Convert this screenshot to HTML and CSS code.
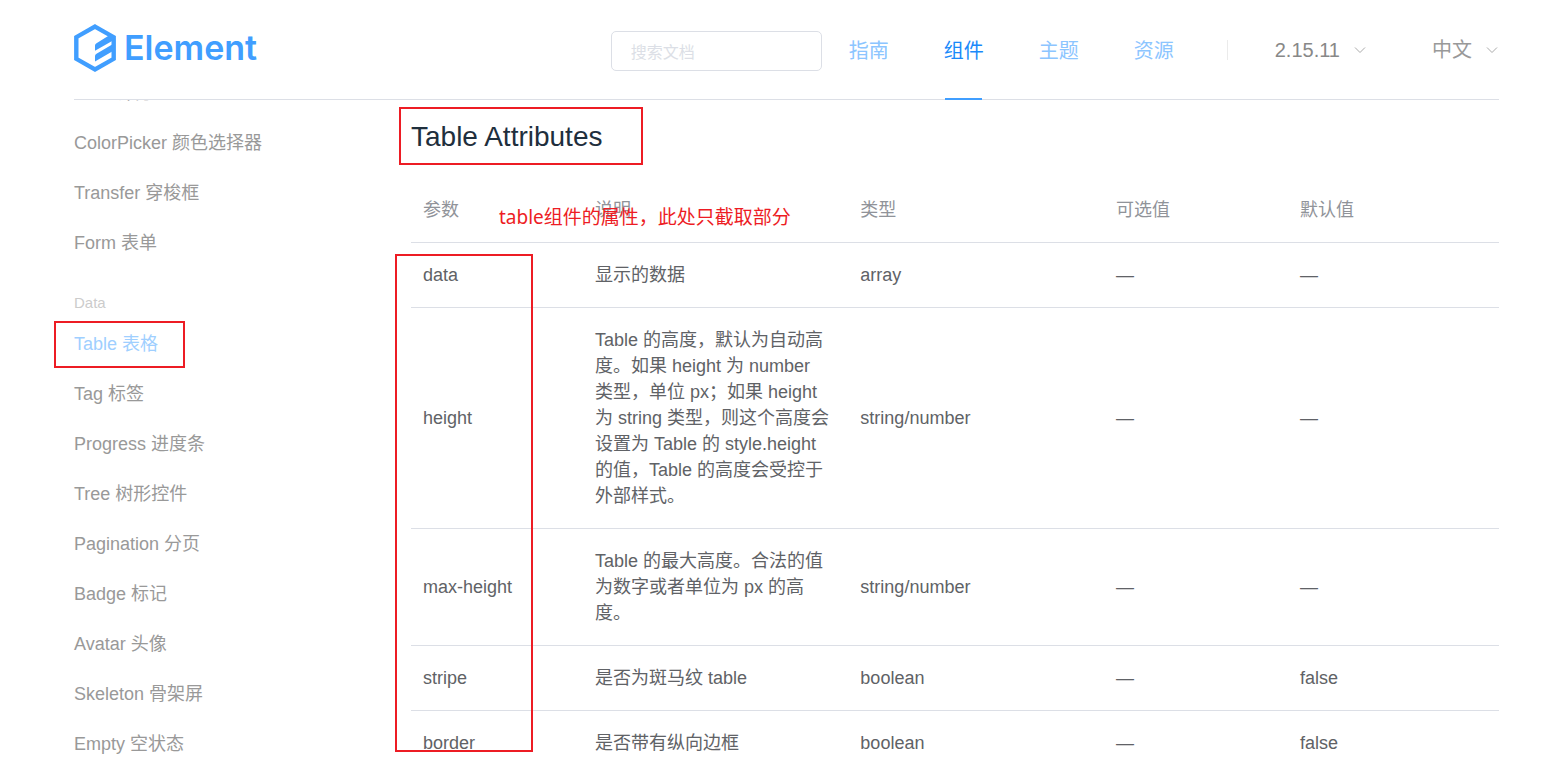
FILE: index.html
```html
<!DOCTYPE html>
<html lang="zh-CN">
<head>
<meta charset="utf-8">
<title>Element - Table</title>
<link rel="stylesheet" href="styles.css">
</head>
<body>
<header class="header">
  <a class="logo" href="#">
    <svg class="logo-mark" viewBox="0 0 42 48" aria-hidden="true">
      <path d="M21 2.600 39.700 13.200V34.800L21 45.400 2.300 34.800V13.200Z" fill="none" stroke="#409eff" stroke-width="4.400"/>
      <path d="M21 21.500Q21 20 22.500 19.200L36.500 10.500 39 12V16.500L21 26.800ZM21 32Q21 30.500 22.500 29.700L39 20V27L21 37.400Z" fill="#409eff"/>
    </svg>
    <span>Element</span>
  </a>
  <div class="tools">
    <input class="search" type="text" placeholder="搜索文档" aria-label="搜索文档">
    <nav class="nav">
      <a href="#">指南</a>
      <a href="#" class="active">组件</a>
      <a href="#">主题</a>
      <a href="#">资源</a>
    </nav>
    <button class="drop version" type="button">2.15.11
      <svg viewBox="0 0 12 8" aria-hidden="true"><path d="M1 1.500 6 6.500 11 1.500"/></svg>
    </button>
    <button class="drop" type="button">中文
      <svg viewBox="0 0 12 8" aria-hidden="true"><path d="M1 1.500 6 6.500 11 1.500"/></svg>
    </button>
  </div>
</header>
<div class="body">
  <aside class="side">
    <ul>
      <li><a href="#">Rate 评分</a></li>
      <li><a href="#">ColorPicker 颜色选择器</a></li>
      <li><a href="#">Transfer 穿梭框</a></li>
      <li><a href="#">Form 表单</a></li>
    </ul>
    <div class="group">Data</div>
    <ul>
      <li class="current"><a href="#">Table 表格</a><span class="mark mark-side"></span></li>
      <li><a href="#">Tag 标签</a></li>
      <li><a href="#">Progress 进度条</a></li>
      <li><a href="#">Tree 树形控件</a></li>
      <li><a href="#">Pagination 分页</a></li>
      <li><a href="#">Badge 标记</a></li>
      <li><a href="#">Avatar 头像</a></li>
      <li><a href="#">Skeleton 骨架屏</a></li>
      <li><a href="#">Empty 空状态</a></li>
    </ul>
  </aside>
  <main class="content">
    <h3>Table Attributes<span class="mark mark-title"></span></h3>
    <div class="table-wrap">
      <table>
        <colgroup><col class="c1"><col class="c2"><col class="c3"><col class="c4"><col class="c5"></colgroup>
        <thead>
          <tr><th>参数</th><th>说明</th><th>类型</th><th>可选值</th><th>默认值</th></tr>
        </thead>
        <tbody>
          <tr><td>data</td><td>显示的数据</td><td>array</td><td>—</td><td>—</td></tr>
          <tr><td>height</td><td>Table 的高度，默认为自动高度。如果 height 为 number 类型，单位 px；如果 height 为 string 类型，则这个高度会设置为 Table 的 style.height 的值，Table 的高度会受控于外部样式。</td><td>string/number</td><td>—</td><td>—</td></tr>
          <tr><td>max-height</td><td>Table 的最大高度。合法的值为数字或者单位为 px 的高度。</td><td>string/number</td><td>—</td><td>—</td></tr>
          <tr><td>stripe</td><td>是否为斑马纹 table</td><td>boolean</td><td>—</td><td>false</td></tr>
          <tr><td>border</td><td>是否带有纵向边框</td><td>boolean</td><td>—</td><td>false</td></tr>
        </tbody>
      </table>
      <span class="mark mark-column"></span>
      <p class="note">table组件的属性，此处只截取部分</p>
    </div>
  </main>
</div>
</body>
</html>
```
FILE: styles.css
```css
* { box-sizing: border-box; }
body {
  margin: 0;
  height: 100vh;
  display: flex;
  flex-direction: column;
  overflow: hidden;
  padding: 0 56px 0 74px;
  background: #fff;
  color: #606266;
  font: 18px/26px "Liberation Sans", "Noto Sans CJK SC", sans-serif;
}
a { text-decoration: none; color: inherit; }
ul { list-style: none; margin: 0; padding: 0; }

.header {
  flex: none;
  height: 100px;
  display: flex;
  justify-content: space-between;
  border-bottom: 1px solid #dcdfe6;
}
.logo {
  display: flex;
  align-items: center;
  gap: 8px;
  height: 96px;
  color: #409eff;
  font: 600 34px/48px Inter, sans-serif;
}
.logo-mark { width: 42px; height: 48px; }
.tools { display: flex; align-items: center; }
.search {
  width: 211px;
  height: 40px;
  margin: 2px 27px 0 0;
  padding: 0 19px;
  border: 1px solid #dcdfe6;
  border-radius: 5px;
  font: 16px "Noto Sans CJK SC", sans-serif;
}
.search::placeholder { color: #dcdfe6; opacity: 1; }
.nav { display: flex; gap: 55px; height: 100px; padding-right: 53px; }
.nav::after {
  content: "";
  align-self: center;
  width: 1px;
  height: 20px;
  margin: 0 -55px 0 -2px;
  background: #ebebeb;
}
.nav a {
  font-size: 20px;
  line-height: 102px;
  color: #8cc5ff;
}
.nav .active {
  color: #1989fa;
  background: linear-gradient(#409eff, #409eff) center bottom / 37px 2px no-repeat;
}
.drop {
  display: flex;
  align-items: center;
  gap: 14px;
  padding: 0;
  border: 0;
  background: none;
  color: #888;
  font: 20px/98px "Liberation Sans", "Noto Sans CJK SC", sans-serif;
}
.drop:last-child { margin-right: 1px; color: #999; }
.version { margin: 0 66px 0 49px; }
.drop svg { width: 12px; height: 8px; fill: none; stroke: #aaa; }

.body { flex: 1; min-height: 0; display: flex; }
.side {
  flex: 0 0 357px;
  overflow: hidden;
  margin-left: -20px;
  padding-left: 20px;
  color: #999;
}
.side ul:first-child { margin-top: -32px; }
.side li { height: 50px; line-height: 50px; position: relative; }
.side .current { color: #9fcfff; }
.group { padding-top: 19px; font-size: 15px; line-height: 32px; color: #ccc; }

.content { flex: 1; min-width: 0; }
h3 {
  position: relative;
  margin: 0;
  padding: 19px 0 23px;
  font-size: 28px;
  line-height: 36px;
  font-weight: 400;
  color: #1f2f3d;
}
.table-wrap { position: relative; }
table { width: 100%; table-layout: fixed; border-collapse: separate; border-spacing: 0; }
.c1 { width: 15.8%; }
.c2 { width: 24.4%; }
.c3 { width: 23.5%; }
.c4 { width: 16.9%; }
.c5 { width: 19.4%; }
th, td {
  padding: 19px 16px 19px 12px;
  border-bottom: 1px solid #dcdfe6;
  text-align: left;
  font-weight: 400;
}
th { color: #909399; }

.mark { position: absolute; border: 2px solid #ed1c24; pointer-events: none; }
.mark-side { left: -20px; top: 2px; width: 131px; height: 47px; }
.mark-title { left: -12px; top: 7px; width: 244px; height: 58px; }
.mark-column { left: -16px; top: 76px; width: 138px; height: 498px; }
.note {
  position: absolute;
  left: 88px;
  top: 25px;
  margin: 0;
  white-space: nowrap;
  color: #ed1c24;
  font: 19px/28px "Noto Sans", "Noto Sans CJK SC", sans-serif;
}
```
